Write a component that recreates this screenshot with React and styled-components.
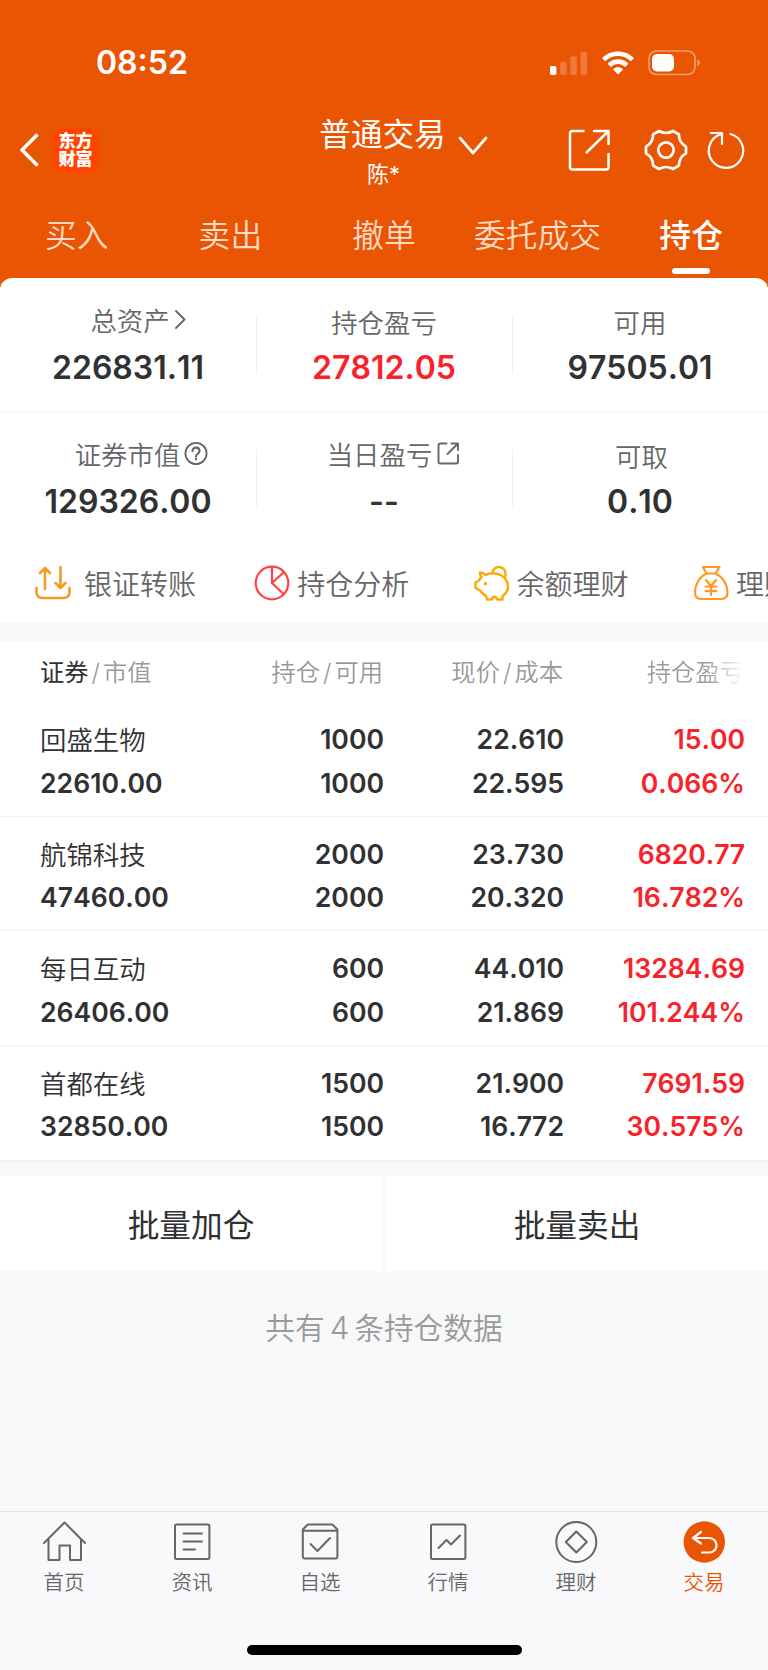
import React, { useState } from "react";
import styled, { createGlobalStyle } from "styled-components";

const Svg = styled.svg.attrs((props) => ({
  fill: props.fill || "none",
  strokeLinecap: "round",
  strokeLinejoin: "round",
}))`
  display: block;
  flex: none;
`;

const summary = [
  [
    { label: "总资产", value: "226831.11", icon: "arrow", indent: 22 },
    { label: "持仓盈亏", value: "27812.05", red: true },
    { label: "可用", value: "97505.01" },
  ],
  [
    { label: "证券市值", value: "129326.00", icon: "help", indent: 27 },
    { label: "当日盈亏", value: "--", icon: "open", indent: 19 },
    { label: "可取", value: "0.10", indent: 3 },
  ],
];

const holdings = [
  { name: "回盛生物", worth: "22610.00", held: "1000", usable: "1000", price: "22.610", cost: "22.595", profit: "15.00", rate: "0.066%" },
  { name: "航锦科技", worth: "47460.00", held: "2000", usable: "2000", price: "23.730", cost: "20.320", profit: "6820.77", rate: "16.782%" },
  { name: "每日互动", worth: "26406.00", held: "600", usable: "600", price: "44.010", cost: "21.869", profit: "13284.69", rate: "101.244%" },
  { name: "首都在线", worth: "32850.00", held: "1500", usable: "1500", price: "21.900", cost: "16.772", profit: "7691.59", rate: "30.575%" },
];

const tabs = ["买入", "卖出", "撤单", "委托成交", "持仓"];

const TransferIcon = () => (
  <Svg width="36" height="36" viewBox="0 0 36 36" stroke="#f59a23" strokeWidth="2.6">
    <path d="M10 24V3M5 8l5-5 5 5M25.5 2v21M20.5 18l5 5 5-5M1.500 23v4c0 3.500 2 6 6 6h21c4 0 6-2.500 6-6v-4" />
  </Svg>
);

const PieIcon = () => (
  <Svg width="36" height="36" viewBox="0 0 36 36" stroke="#ff4245" strokeWidth="2.2">
    <circle cx="18" cy="18" r="16.3" />
    <path d="M18 2v16l11.5 11M18 18L29.5 7.5" />
  </Svg>
);

const PiggyIcon = () => (
  <Svg width="36" height="36" viewBox="0 0 36 36" stroke="#fbaa0a" strokeWidth="2.5">
    <path d="M18.5 8c0-8 13.5-8.500 13 1.500 0 1-.3 2-.8 3" />
    <path d="M6 7.500c2 0 4.500 1.500 5.500 2.500 4-2.500 11-2.500 15 0 4 2 7.500 6 7.500 11.500 0 4-2.500 7.500-5.500 9.500v3.500h-5.500l-1-2.500h-3l-1 2.500h-5l-1-3.500c-2.500-1-4.500-4-6-5.500L1.500 23v-5.500L5 15.500c.7-1.500 1.500-2.500 2.500-3.500C6.500 11 6 9 6 7.500z" />
    <circle cx="11.5" cy="18.5" r=".6" fill="#fbaa0a" />
  </Svg>
);

const MoneyBagIcon = () => (
  <Svg width="36" height="36" viewBox="0 0 36 36" stroke="#ff9720" strokeWidth="2.2">
    <path d="M10 2h16.5l-4 6.500h-9zM13.5 8.500C6 12 2 20 2 27c0 4.500 2 7 6 7h20.500c4 0 6-2.500 6-7 0-7-4.500-15-12-18.500" />
    <path d="M13 15l5 6 5-6M18 21v9M12.500 21.500h11M12.500 26h11" />
  </Svg>
);

const shortcuts = [
  { text: "银证转账", Icon: TransferIcon, gap: 13 },
  { text: "持仓分析", Icon: PieIcon, gap: 7 },
  { text: "余额理财", Icon: PiggyIcon, gap: 7 },
  { text: "理财", Icon: MoneyBagIcon, gap: 7 },
];

const labelIcons = {
  arrow: (
    <Svg width="18" height="24" viewBox="0 0 18 24" stroke="#666" strokeWidth="1.9">
      <path d="M6 4l8.500 8.500L6 21" />
    </Svg>
  ),
  help: (
    <Svg width="28" height="24" viewBox="0 0 28 24" stroke="#666" strokeWidth="1.8">
      <circle cx="16" cy="12.5" r="10.6" />
      <path d="M12.5 10c0-4.500 7-4.500 7 0 0 2.500-3.500 3-3.500 5.500M16 17.800v.6" strokeWidth="2.1" />
    </Svg>
  ),
  open: (
    <Svg width="28" height="24" viewBox="0 0 28 24" stroke="#666" strokeWidth="1.9">
      <path d="M14.5 2.500H8.500q-2 0-2 2v16q0 2 2 2h15.500q2 0 2-2v-6.500M15.500 13L25.500 3M19.500 2.500h6.500v6.500" />
    </Svg>
  ),
};

const navItems = [
  {
    text: "首页",
    icon: <path d="M1 22L21.500 1.500 42 22M5.500 18v21h11V24.500h10.500V39h11V18" />,
  },
  {
    text: "资讯",
    icon: (
      <>
        <rect x="4" y="3.5" width="34.4" height="34.4" rx="1.5" />
        <path d="M12.500 12.500H31M12.500 20.500H31M12.500 28.500H24" />
      </>
    ),
  },
  {
    text: "自选",
    icon: (
      <>
        <path d="M3.800 8.500v27q0 2 2 2h30.600q2 0 2-2v-27l-5-5H8.800zM4 9.800h34.300" />
        <path d="M11.500 23l7 7L31 17" />
      </>
    ),
  },
  {
    text: "行情",
    icon: (
      <>
        <rect x="4" y="3.5" width="34.4" height="34.4" rx="1.5" />
        <path d="M11.500 27l8-8 4.500 4.500 9-9" />
      </>
    ),
  },
  {
    text: "理财",
    icon: (
      <>
        <circle cx="21.3" cy="21" r="20" />
        <path d="M21.300 10.500l10.500 10.500-10.500 10.500L10.800 21z" />
      </>
    ),
  },
  {
    text: "交易",
    icon: (
      <>
        <circle cx="21.3" cy="21" r="20.7" fill="#ea5504" stroke="none" />
        <path d="M18 11l-8 6 8 5.500M10.500 17H26c10 0 10 14.500 0 14.500h-7" stroke="#fff" strokeWidth="2.2" />
      </>
    ),
  },
];

function App() {
  const [tab, setTab] = useState("持仓");
  const [nav, setNav] = useState("交易");

  return (
    <Page>
      <GlobalStyle />
      <Header>
        <StatusBar>
          <Clock>08:52</Clock>
          <StatusIcons>
            <Svg width="38" height="24" viewBox="0 0 38 24">
              <rect x="0" y="15" width="6.4" height="9" rx="1.8" fill="#fff" />
              <g fill="#fff" opacity=".22">
                <rect x="10.2" y="10.5" width="6.4" height="13.5" rx="1.8" />
                <rect x="20.4" y="5.5" width="6.4" height="18.5" rx="1.8" />
                <rect x="30.6" y="0.5" width="6.4" height="23.5" rx="1.8" />
              </g>
            </Svg>
            <Svg width="32" height="24" viewBox="0 0 32 24" fill="#fff">
              <path d="M16 .5C10 .5 4.500 2.800.6 6.500q-.6.600 0 1.300l2 2q.6.500 1.200 0C7 6.800 11.300 5.100 16 5.100s9 1.700 12.200 4.700q.6.500 1.200 0l2-2q.6-.7 0-1.300C27.500 2.800 22 .5 16 .5z" />
              <path d="M16 8.300c-3.800 0-7.200 1.400-9.900 3.800q-.6.600 0 1.200l2.200 2.200q.5.500 1.100 0c1.800-1.600 4.100-2.500 6.600-2.500s4.800.9 6.600 2.500q.6.500 1.100 0l2.200-2.200q.6-.6 0-1.200C23.200 9.700 19.800 8.300 16 8.300z" />
              <path d="M16 16.200c-1.800 0-3.300.6-4.500 1.600q-.6.500 0 1.100l3.900 4q.6.600 1.200 0l3.900-4q.6-.6 0-1.100c-1.200-1-2.700-1.600-4.500-1.600z" />
            </Svg>
            <Svg width="53" height="26" viewBox="0 0 53 26">
              <rect x="1" y="1" width="46" height="23.5" rx="7.5" stroke="#fff" strokeOpacity=".42" strokeWidth="1.7" />
              <rect x="4" y="4" width="22" height="17.5" rx="5" fill="#fff" />
              <path d="M49.500 9.300c3 1.500 3 5.500 0 7z" fill="#fff" fillOpacity=".45" />
            </Svg>
          </StatusIcons>
        </StatusBar>

        <TitleBar>
          <TitleLeft>
            <Svg width="20" height="34" viewBox="0 0 20 34" stroke="#fff" strokeWidth="3.6">
              <path d="M17.500 2.500L3 17l14.500 14.500" />
            </Svg>
            <Logo>
              东方
              <br />
              财富
            </Logo>
          </TitleLeft>
          <Account>
            <AccountText>
              <AccountType>普通交易</AccountType>
              <AccountName>陈*</AccountName>
            </AccountText>
            <Svg width="30" height="20" viewBox="0 0 30 20" stroke="#fff" strokeWidth="2.7">
              <path d="M2 2l13 15L28 2" />
            </Svg>
          </Account>
          <TitleRight>
            <Svg width="42" height="42" viewBox="0 0 42 42" stroke="#fff" strokeWidth="2.5">
              <path d="M15.500 2H4.500q-2.500 0-2.500 2.500v33.500q0 2.500 2.500 2.500H38q2.500 0 2.500-2.500V25M18.500 23.500L40 2.500M26 2h14.500v13" />
            </Svg>
            <Svg width="44" height="42" viewBox="-22 -21 44 42" stroke="#fff" strokeWidth="2.7">
              <path d="M20-3.400V3.400Q12.900 7.400 12.900 15.600L7 19Q0 15-7 19L-12.900 15.600Q-12.900 7.400-20 3.400V-3.400Q-12.900-7.400-12.900-15.600L-7-19Q0-15 7-19L12.900-15.600Q12.900-7.400 20-3.400z" />
              <circle r="7.7" />
            </Svg>
            <Svg width="38" height="40" viewBox="0 0 38 40" stroke="#fff" strokeWidth="2.2">
              <path d="M23.500 4A17.200 17.200 0 1 1 13.800 4.200M3.800 3H15v11" />
            </Svg>
          </TitleRight>
        </TitleBar>

        <Tabs>
          {tabs.map((item) => (
            <Tab key={item} $active={item === tab} onClick={() => setTab(item)}>
              {item}
            </Tab>
          ))}
        </Tabs>
      </Header>

      <Sheet>
        {summary.map((row, i) => (
          <SummaryRow key={i}>
            {row.map((cell) => (
              <SummaryCell key={cell.label}>
                <SummaryLabel $raised={Boolean(cell.icon)} $indent={cell.indent || 0}>
                  {cell.label}
                  {labelIcons[cell.icon]}
                </SummaryLabel>
                <SummaryValue $red={cell.red}>{cell.value}</SummaryValue>
              </SummaryCell>
            ))}
          </SummaryRow>
        ))}
        <Shortcuts>
          {shortcuts.map(({ text, Icon, gap }) => (
            <Shortcut key={text} $gap={gap}>
              <Icon />
              {text}
            </Shortcut>
          ))}
        </Shortcuts>
      </Sheet>

      <Holdings>
        <HoldingsHead>
          <div>
            <Strong>证券</Strong>
            <Slash>/</Slash>市值
          </div>
          <div>
            持仓<Slash>/</Slash>可用
          </div>
          <div>
            现价<Slash>/</Slash>成本
          </div>
          <FadeText>持仓盈亏</FadeText>
        </HoldingsHead>
        {holdings.map((row) => (
          <HoldingRow key={row.name}>
            <Cell>
              <StockName>{row.name}</StockName>
              <span>{row.worth}</span>
            </Cell>
            <Cell>
              <span>{row.held}</span>
              <span>{row.usable}</span>
            </Cell>
            <Cell>
              <span>{row.price}</span>
              <span>{row.cost}</span>
            </Cell>
            <Cell $red>
              <span>{row.profit}</span>
              <span>{row.rate}</span>
            </Cell>
          </HoldingRow>
        ))}
      </Holdings>

      <Actions>
        <ActionButton>批量加仓</ActionButton>
        <ActionButton>批量卖出</ActionButton>
      </Actions>
      <Total>
        共有<TotalCount>4</TotalCount>条持仓数据
      </Total>

      <BottomNav>
        <NavList>
          {navItems.map((item) => (
            <NavItem key={item.text} $active={item.text === nav} onClick={() => setNav(item.text)}>
              <Svg width="43" height="42" viewBox="0 0 43 42" stroke="#666" strokeWidth="2">
                {item.icon}
              </Svg>
              {item.text}
            </NavItem>
          ))}
        </NavList>
        <HomeIndicator />
      </BottomNav>
    </Page>
  );
}

// Styled Components
const GlobalStyle = createGlobalStyle`
  * {
    box-sizing: border-box;
  }
  body {
    margin: 0;
    background: #f7f8fa;
  }
`;

const Page = styled.div`
  display: flex;
  flex-direction: column;
  width: 768px;
  height: 1670px;
  overflow: hidden;
  background: #f7f8fa;
  color: #303133;
  font-family: Inter, "Noto Sans CJK SC", sans-serif;
  font-kerning: none;
`;

const Button = styled.button`
  padding: 0;
  border: 0;
  background: none;
  color: inherit;
  font-family: inherit;
`;

const Header = styled.header`
  height: 290px;
  flex: none;
  background: #ea5504;
  color: #fff;
`;

const StatusBar = styled.div`
  display: flex;
  justify-content: space-between;
  align-items: center;
  height: 125px;
  padding: 0 67px 0 96px;
`;

const Clock = styled.div`
  font-size: 32px;
  font-weight: 600;
`;

const StatusIcons = styled.div`
  display: flex;
  align-items: center;
  gap: 14px;
`;

const TitleBar = styled.div`
  display: grid;
  grid-template-columns: 1fr auto 1fr;
  grid-template-rows: 50px;
`;

const TitleLeft = styled.div`
  display: flex;
  align-items: center;
  gap: 14px;
  padding-left: 19px;
`;

const TitleRight = styled.div`
  display: flex;
  align-items: center;
  justify-content: flex-end;
  padding-right: 23px;

  svg:nth-child(2) {
    margin: 0 19px 0 34px;
  }
`;

const Logo = styled.div`
  width: 45px;
  height: 45px;
  padding-top: 4px;
  border-radius: 9px;
  background: #ff4500;
  font-size: 17px;
  line-height: 18.5px;
  font-weight: 900;
  text-align: center;
`;

const Account = styled.div`
  display: flex;
  align-items: center;
  gap: 12px;
  padding-left: 39px;

  svg {
    margin-bottom: 8px;
  }
`;

const AccountText = styled.div`
  padding-top: 6px;
  text-align: center;
  white-space: nowrap;
`;

const AccountType = styled.div`
  font-size: 31.6px;
  line-height: 42px;
`;

const AccountName = styled.div`
  padding-left: 2px;
  font-size: 22px;
  line-height: 36px;
`;

const Tabs = styled.nav`
  display: flex;
  height: 99px;
`;

const Tab = styled(Button)`
  display: flex;
  flex: 1;
  flex-direction: column;
  align-items: center;
  padding-top: 38px;
  font-size: 31.8px;
  line-height: 46px;
  font-weight: ${(props) => (props.$active ? 500 : 350)};
  color: ${(props) => (props.$active ? "#fff" : "#ffdac7")};

  &::after {
    content: "";
    width: 38px;
    height: 6px;
    margin-top: 9px;
    border-radius: 3px;
    background: ${(props) => (props.$active ? "#fff" : "transparent")};
  }
`;

const Sheet = styled.section`
  flex: none;
  height: 344px;
  margin-top: -12px;
  border-radius: 12px 12px 0 0;
  background: #fff;
`;

const SummaryRow = styled.div`
  display: flex;
  height: 133px;
  padding-top: 23px;

  & + & {
    height: 135px;
    border-top: 1px solid #f5f5f7;
  }
`;

const SummaryCell = styled.div`
  display: flex;
  flex: 1;
  flex-direction: column;
  align-items: center;

  & + & {
    background: linear-gradient(#f0f0f2, #f0f0f2) 0 15px / 1px 57px no-repeat;
  }
`;

const SummaryLabel = styled.div`
  display: flex;
  align-items: center;
  height: 45px;
  padding-bottom: ${(props) => (props.$raised ? "9px" : "5px")};
  padding-left: ${(props) => props.$indent}px;
  font-size: 26.4px;
  font-weight: 350;
  color: #666;
`;

const SummaryValue = styled.div`
  font-size: 32px;
  line-height: 44px;
  font-weight: 600;
  color: ${(props) => (props.$red ? "#f8232a" : "#303133")};
`;

const Shortcuts = styled.div`
  display: flex;
  align-items: center;
  height: 74px;
  padding-left: 35px;
  overflow: hidden;
`;

const Shortcut = styled.div`
  display: flex;
  flex: 0 0 219.3px;
  align-items: center;
  gap: ${(props) => props.$gap}px;
  font-size: 28px;
  font-weight: 350;
  color: #666;
  white-space: nowrap;
`;

const Holdings = styled.section`
  flex: none;
  margin-top: 19px;
  background: #fff;
`;

const HoldingsHead = styled.div`
  display: grid;
  grid-template-columns: 163px 180px 180px 181px;
  justify-items: end;
  align-items: center;
  height: 61px;
  padding: 0 24px 2px 40px;
  font-size: 24.3px;
  font-weight: 350;
  color: #999;
  white-space: nowrap;

  & > :first-child {
    justify-self: start;
  }
`;

const Strong = styled.span`
  font-weight: 400;
  color: #303133;
`;

const Slash = styled.span`
  margin: 0 3px;
`;

const FadeText = styled.div`
  background: linear-gradient(to right, #999 60%, #fff 100%);
  background-clip: text;
  color: transparent;
`;

const HoldingRow = styled.div`
  display: grid;
  grid-template-columns: 164px 180px 180px 181px;
  height: 114.66px;
  padding: 16px 23px 0 40px;
  border-bottom: 1px solid #f0f1f3;
`;

const Cell = styled.div`
  display: flex;
  flex-direction: column;
  align-items: flex-end;
  font-size: 26.6px;
  line-height: 43.5px;
  font-weight: 600;
  color: ${(props) => (props.$red ? "#f8232a" : "#303133")};

  &:first-child {
    align-items: flex-start;
  }
`;

const StockName = styled.span`
  height: 43.5px;
  padding-top: 1px;
  font-size: 26.4px;
  font-weight: 350;
`;

const Actions = styled.div`
  display: flex;
  flex: none;
  gap: 4px;
  margin-top: 15px;
`;

const ActionButton = styled(Button)`
  flex: 1;
  height: 95px;
  padding-bottom: 1px;
  background: #fff;
  font-size: 31.7px;
`;

const Total = styled.div`
  padding-top: 35px;
  font-size: 29.7px;
  line-height: 44px;
  font-weight: 350;
  text-align: center;
  color: #999;
`;

const TotalCount = styled.span`
  margin: 0 5px;
  font-size: 31px;
`;

const BottomNav = styled.footer`
  margin-top: auto;
  flex: none;
  height: 159px;
  border-top: 1px solid #e2e3e5;
  background: #f9f9fb;
`;

const NavList = styled.div`
  display: flex;
  height: 132.5px;
  padding-top: 9px;
`;

const NavItem = styled(Button)`
  display: flex;
  flex: 1;
  flex-direction: column;
  align-items: center;
  gap: 4px;
  font-size: 20.5px;
  line-height: 32px;
  font-weight: 350;
  color: ${(props) => (props.$active ? "#ea5504" : "#666")};
`;

const HomeIndicator = styled.div`
  width: 275px;
  height: 10px;
  margin: 0 auto;
  border-radius: 5px;
  background: #000;
`;

export default App;
